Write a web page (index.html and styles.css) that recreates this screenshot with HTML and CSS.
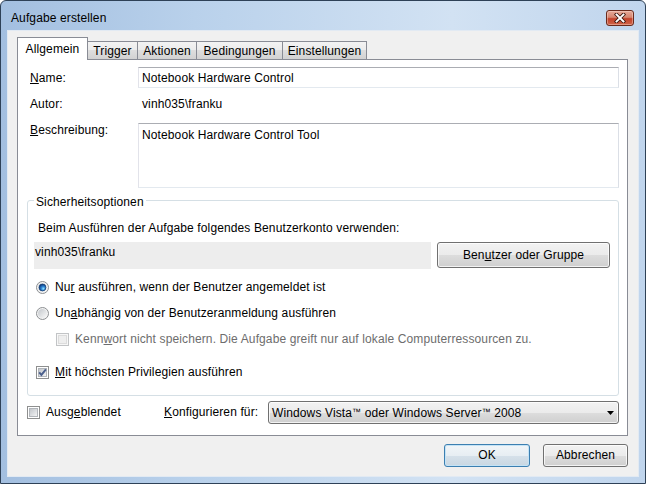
FILE: index.html
```html
<!DOCTYPE html>
<html lang="de">
<head>
<meta charset="utf-8">
<title>Aufgabe erstellen</title>
<link rel="stylesheet" href="styles.css">
</head>
<body>
<div class="window">
  <div class="titlebar">
    <span class="title">Aufgabe erstellen</span>
    <button class="close" aria-label="Schließen">
      <svg width="12" height="10" viewBox="0 0 12 10"><path d="M2.5 1.5 L9.5 8.5 M9.5 1.5 L2.5 8.5" stroke="#3d1810" stroke-width="3.6" stroke-linecap="square"/><path d="M2.5 1.5 L9.5 8.5 M9.5 1.5 L2.5 8.5" stroke="#ffffff" stroke-width="1.9" stroke-linecap="square"/></svg>
    </button>
  </div>
  <div class="client">
    <div class="tabs">
      <div class="tab active tab-allg">Allgemein</div>
      <div class="tab tab-trig">Trigger</div>
      <div class="tab tab-akt">Aktionen</div>
      <div class="tab tab-bed">Bedingungen</div>
      <div class="tab tab-ein">Einstellungen</div>
    </div>
    <div class="panel">
      <div class="field-row">
        <label class="lbl"><u>N</u>ame:</label>
        <div class="input">Notebook Hardware Control</div>
      </div>
      <div class="field-row autor-row">
        <span class="lbl">Autor:</span>
        <span class="value">vinh035\franku</span>
      </div>
      <div class="field-row desc-row">
        <label class="lbl desc-lbl"><u>B</u>eschreibung:</label>
        <div class="textarea">Notebook Hardware Control Tool</div>
      </div>
      <fieldset class="group">
        <legend>Sicherheitsoptionen</legend>
        <div class="g-text">Beim Ausführen der Aufgabe folgendes Benutzerkonto verwenden:</div>
        <div class="user-row">
          <div class="user-box">vinh035\franku</div>
          <button class="btn user-btn">Ben<u>u</u>tzer oder Gruppe</button>
        </div>
        <div class="opt opt-first">
          <svg class="mark" width="13" height="13" viewBox="0 0 13 13">
            <defs>
              <linearGradient id="rgA" x1="0" y1="0" x2="1" y2="1"><stop offset="0" stop-color="#c8ccd1"/><stop offset="1" stop-color="#fafafa"/></linearGradient>
              <radialGradient id="dotA" cx="0.62" cy="0.66" r="0.62"><stop offset="0" stop-color="#8fe6ff"/><stop offset="0.45" stop-color="#2f86d6"/><stop offset="1" stop-color="#0d3e86"/></radialGradient>
            </defs>
            <circle cx="6.5" cy="6.5" r="6" fill="#f3f3f3" stroke="#8c8f92"/>
            <circle cx="6.5" cy="6.5" r="4.5" fill="url(#rgA)"/>
            <circle cx="6.5" cy="6.5" r="3.4" fill="url(#dotA)" stroke="#173f73" stroke-width="0.8"/>
          </svg>
          <span>Nu<u>r</u> ausführen, wenn der Benutzer angemeldet ist</span>
        </div>
        <div class="opt">
          <svg class="mark" width="13" height="13" viewBox="0 0 13 13">
            <defs>
              <linearGradient id="rgB" x1="0" y1="0" x2="1" y2="1"><stop offset="0" stop-color="#c3c7cc"/><stop offset="1" stop-color="#fafafa"/></linearGradient>
            </defs>
            <circle cx="6.5" cy="6.5" r="6" fill="#f3f3f3" stroke="#8c8f92"/>
            <circle cx="6.5" cy="6.5" r="4.5" fill="url(#rgB)"/>
          </svg>
          <span>Un<u>a</u>bhängig von der Benutzeranmeldung ausführen</span>
        </div>
        <div class="opt opt-sub disabled">
          <svg class="mark" width="13" height="13" viewBox="0 0 13 13">
            <rect x="0.5" y="0.5" width="12" height="12" fill="#f7f7f7" stroke="#c2c4c6"/>
            <rect x="2.5" y="2.5" width="8" height="8" fill="#eeeeee" stroke="#dcdcdc"/>
          </svg>
          <span>Kenn<u>w</u>ort nicht speichern. Die Aufgabe greift nur auf lokale Computerressourcen zu.</span>
        </div>
        <div class="opt opt-priv">
          <svg class="mark" width="13" height="13" viewBox="0 0 13 13">
            <defs>
              <linearGradient id="cgA" x1="0" y1="0" x2="1" y2="1"><stop offset="0" stop-color="#bfc3c8"/><stop offset="1" stop-color="#f5f5f6"/></linearGradient>
            </defs>
            <rect x="0.5" y="0.5" width="12" height="12" fill="#ffffff" stroke="#8e8f8f"/>
            <rect x="2.5" y="2.5" width="8" height="8" fill="url(#cgA)" stroke="#b1b5ba"/>
            <path d="M3.2 6.4 L5.4 8.9 L9.9 3.3" fill="none" stroke="#4a5f8c" stroke-width="1.9"/>
          </svg>
          <span><u>M</u>it höchsten Privilegien ausführen</span>
        </div>
      </fieldset>
      <div class="bottom-row">
        <div class="hidden-opt">
          <svg class="mark" width="13" height="13" viewBox="0 0 13 13">
            <defs>
              <linearGradient id="cgB" x1="0" y1="0" x2="1" y2="1"><stop offset="0" stop-color="#bfc3c8"/><stop offset="1" stop-color="#f5f5f6"/></linearGradient>
            </defs>
            <rect x="0.5" y="0.5" width="12" height="12" fill="#ffffff" stroke="#8e8f8f"/>
            <rect x="2.5" y="2.5" width="8" height="8" fill="url(#cgB)" stroke="#b1b5ba"/>
          </svg>
          <span>Ausg<u>e</u>blendet</span>
        </div>
        <span class="config-lbl"><u>K</u>onfigurieren für:</span>
        <div class="combo">
          <span>Windows Vista<span class="tm">™</span> oder Windows Server<span class="tm">™</span> 2008</span>
          <svg class="arrow" width="7" height="4" viewBox="0 0 7 4"><path d="M0 0 H7 L3.5 4 Z" fill="#000"/></svg>
        </div>
      </div>
    </div>
    <div class="buttons">
      <button class="btn btn-ok">OK</button>
      <button class="btn btn-cancel">Abbrechen</button>
    </div>
  </div>
</div>
</body>
</html>
```

FILE: styles.css
```css
html, body {
  margin: 0;
  padding: 0;
  background: #ffffff;
}

body {
  font-family: "Liberation Sans", Arial, sans-serif;
  font-size: 12px;
  line-height: 15px;
  letter-spacing: 0.12px;
  color: #000;
}

u {
  text-underline-offset: 1px;
}

.window {
  width: 646px;
  height: 484px;
  box-sizing: border-box;
  border: 1px solid #2e4157;
  border-radius: 6px 6px 0 0;
  background: linear-gradient(90deg, #a3bfe0 0%, #b9d1eb 30%, #d2e2f3 70%, #c0d5ed 100%);
  padding: 0 6px 6px;
  display: flex;
  flex-direction: column;
}

.titlebar {
  height: 29px;
  flex: none;
  box-sizing: border-box;
  padding: 5px 5px 0 4px;
  display: flex;
  align-items: center;
  justify-content: space-between;
}

.title {
  color: #000;
}

.close {
  width: 28px;
  height: 16px;
  box-sizing: border-box;
  padding: 0;
  border: 1px solid #6a2a1c;
  border-radius: 3px;
  background: linear-gradient(#e6a998 0%, #d6856f 45%, #c2412a 55%, #d0654a 100%);
  box-shadow: inset 0 0 0 1px rgba(255, 230, 220, 0.4);
  display: flex;
  align-items: center;
  justify-content: center;
}

.client {
  flex: 1;
  min-height: 0;
  background: #f0f0f0;
  border: 1px solid #e2eaf3;
  padding: 6px 10px 0 9px;
  display: flex;
  flex-direction: column;
}

.tabs {
  height: 22px;
  flex: none;
  display: flex;
  align-items: flex-end;
}

.tab {
  height: 18px;
  box-sizing: border-box;
  border: 1px solid #898c95;
  border-bottom: none;
  margin-left: -1px;
  padding-top: 2px;
  text-align: center;
  background: linear-gradient(#f3f3f3 0%, #ebebeb 50%, #dedede 50%, #d2d2d2 100%);
}

.tab.active {
  height: 23px;
  margin-left: 0;
  margin-bottom: -1px;
  padding-top: 4px;
  background: #ffffff;
  position: relative;
  z-index: 1;
}

.tab-allg { width: 71px; }
.tab-trig { width: 51px; }
.tab-akt { width: 60px; }
.tab-bed { width: 87px; }
.tab-ein { width: 85px; }

.panel {
  flex: none;
  background: #ffffff;
  border: 1px solid #898c95;
  padding: 7px 8px 11px 9px;
  display: flex;
  flex-direction: column;
}

.field-row {
  display: flex;
  align-items: center;
  height: 21px;
}

.lbl {
  width: 108px;
  padding-left: 3px;
  padding-top: 1px;
  flex: none;
}

.input {
  flex: 1;
  height: 21px;
  box-sizing: border-box;
  border: 1px solid;
  border-color: #abadb3 #dbdfe6 #e3e9ef #e2e3ea;
  padding: 1px 3px 0;
  display: flex;
  align-items: center;
}

.autor-row {
  margin-top: 5px;
}

.value {
  padding-left: 4px;
  padding-top: 1px;
}

.desc-row {
  height: auto;
  align-items: flex-start;
  margin-top: 9px;
}

.desc-lbl {
  padding-top: 0;
}

.textarea {
  flex: 1;
  height: 65px;
  box-sizing: border-box;
  border: 1px solid;
  border-color: #abadb3 #dbdfe6 #e3e9ef #e2e3ea;
  padding: 4px 3px;
}

.group {
  margin: 3px 0 0;
  padding: 11px 8px 14px 6px;
  border: 1px solid #d5dfe5;
  border-radius: 3px;
  min-width: 0;
}

.group legend {
  padding: 4px 2px 0;
  margin: 0;
  line-height: 15px;
}

.g-text {
  padding-left: 4px;
}

.user-row {
  margin-top: 6px;
  display: flex;
  gap: 6px;
  align-items: flex-start;
}

.user-box {
  flex: 1;
  height: 27px;
  box-sizing: border-box;
  background: #ededed;
  padding: 3px 1px 0;
}

.btn {
  font: inherit;
  letter-spacing: inherit;
  color: #000;
  height: 23px;
  box-sizing: border-box;
  padding: 0;
  border: 1px solid #707070;
  border-radius: 3px;
  background: linear-gradient(#f2f2f2 0%, #ebebeb 50%, #dddddd 50%, #cfcfcf 100%);
  box-shadow: inset 0 0 0 1px rgba(255, 255, 255, 0.75);
}

.user-btn {
  width: 173px;
  height: 26px;
}

.opt {
  height: 17px;
  display: flex;
  align-items: center;
  gap: 6px;
  padding-left: 2px;
  margin-top: 9px;
}

.opt-first {
  margin-top: 10px;
}

.opt-sub {
  padding-left: 22px;
}

.opt-priv {
  margin-top: 16px;
}

.disabled {
  color: #6d6d6d;
}

.mark {
  flex: none;
  display: block;
}

.bottom-row {
  margin-top: 5px;
  height: 23px;
  display: flex;
  align-items: center;
}

.hidden-opt {
  width: 137px;
  flex: none;
  display: flex;
  align-items: center;
  gap: 6px;
}

.config-lbl {
  width: 104px;
  flex: none;
}

.combo {
  flex: 1;
  height: 23px;
  box-sizing: border-box;
  border: 1px solid #707070;
  border-radius: 3px;
  background: linear-gradient(#f2f2f2 0%, #ebebeb 50%, #dddddd 50%, #cfcfcf 100%);
  box-shadow: inset 0 0 0 1px rgba(255, 255, 255, 0.75);
  padding: 0 4px 0 3px;
  display: flex;
  align-items: center;
  justify-content: space-between;
}

.tm {
  font-size: 9px;
  vertical-align: 2px;
}

.arrow {
  display: block;
}

.buttons {
  margin-top: 8px;
  display: flex;
  justify-content: flex-end;
  gap: 13px;
}

.btn-ok {
  width: 86px;
  border-color: #3c7fb1;
  background: linear-gradient(#f1f5f8 0%, #e7eef3 50%, #d6e1ea 50%, #c9d7e2 100%);
  box-shadow: inset 0 0 0 1px #c4e3f6;
}

.btn-cancel {
  width: 85px;
}
```
